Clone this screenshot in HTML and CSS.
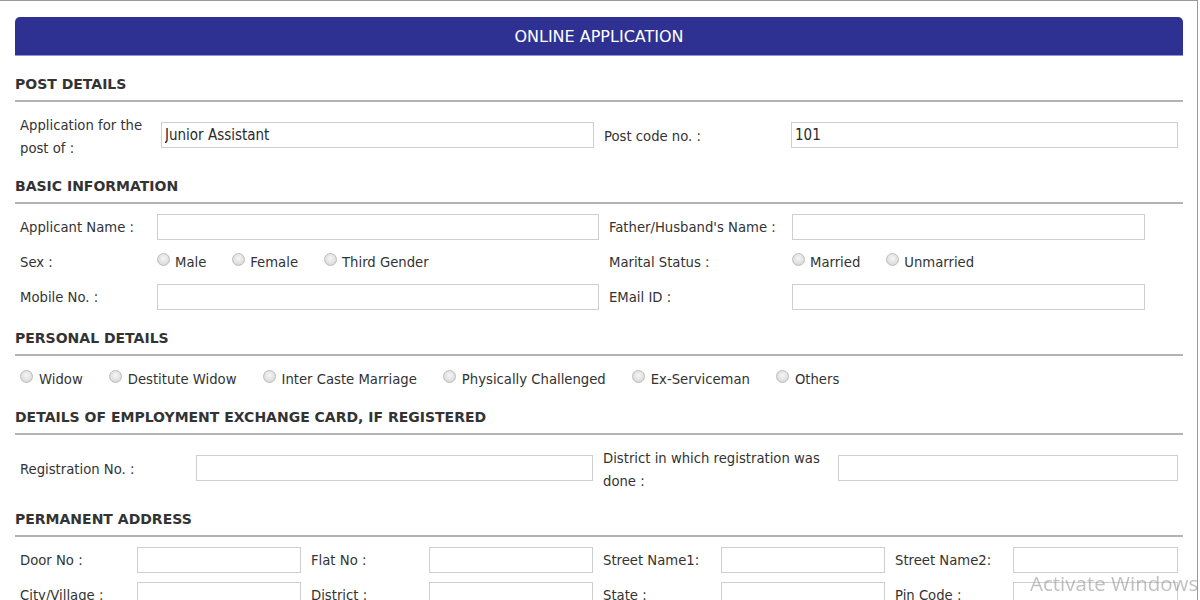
FILE: index.html
```html
<!DOCTYPE html>
<html>
<head>
<meta charset="utf-8">
<link rel="stylesheet" href="styles.css">
</head>
<body>
<div class="frame">
  <div class="bar">ONLINE APPLICATION</div>

  <h2 class="sec sec-post">POST DETAILS</h2>
  <div class="grid g-post tall">
    <div class="cell label two">Application for the<br>post of :</div>
    <div class="cell"><input class="field" type="text" value="Junior Assistant"></div>
    <div class="cell label">Post code no. :</div>
    <div class="cell"><input class="field" type="text" value="101"></div>
  </div>

  <h2 class="sec">BASIC INFORMATION</h2>
  <div class="rows">
    <div class="grid g-basic">
      <div class="cell label">Applicant Name :</div>
      <div class="cell"><input class="field" type="text"></div>
      <div class="cell label">Father/Husband's Name :</div>
      <div class="cell"><input class="field" type="text"></div>
    </div>
    <div class="grid g-basic">
      <div class="cell label">Sex :</div>
      <div class="cell opts">
        <label class="opt"><input class="radio" type="radio" name="sex">Male</label>
        <label class="opt"><input class="radio" type="radio" name="sex">Female</label>
        <label class="opt"><input class="radio" type="radio" name="sex">Third Gender</label>
      </div>
      <div class="cell label">Marital Status :</div>
      <div class="cell opts">
        <label class="opt"><input class="radio" type="radio" name="ms">Married</label>
        <label class="opt"><input class="radio" type="radio" name="ms">Unmarried</label>
      </div>
    </div>
    <div class="grid g-basic">
      <div class="cell label">Mobile No. :</div>
      <div class="cell"><input class="field" type="text"></div>
      <div class="cell label">EMail ID :</div>
      <div class="cell"><input class="field" type="text"></div>
    </div>
  </div>

  <h2 class="sec sec-personal">PERSONAL DETAILS</h2>
  <div class="rows">
    <div class="cell opts personal">
      <label class="opt"><input class="radio" type="radio" name="pd">Widow</label>
      <label class="opt"><input class="radio" type="radio" name="pd">Destitute Widow</label>
      <label class="opt"><input class="radio" type="radio" name="pd">Inter Caste Marriage</label>
      <label class="opt"><input class="radio" type="radio" name="pd">Physically Challenged</label>
      <label class="opt"><input class="radio" type="radio" name="pd">Ex-Serviceman</label>
      <label class="opt"><input class="radio" type="radio" name="pd">Others</label>
    </div>
  </div>

  <h2 class="sec sec-emp">DETAILS OF EMPLOYMENT EXCHANGE CARD, IF REGISTERED</h2>
  <div class="grid g-emp tall">
    <div class="cell label">Registration No. :</div>
    <div class="cell"><input class="field" type="text"></div>
    <div class="cell label two">District in which registration was<br>done :</div>
    <div class="cell"><input class="field" type="text"></div>
  </div>

  <h2 class="sec">PERMANENT ADDRESS</h2>
  <div class="rows">
    <div class="grid g-addr">
      <div class="cell label">Door No :</div>
      <div class="cell"><input class="field" type="text"></div>
      <div class="cell label">Flat No :</div>
      <div class="cell"><input class="field" type="text"></div>
      <div class="cell label">Street Name1:</div>
      <div class="cell"><input class="field" type="text"></div>
      <div class="cell label">Street Name2:</div>
      <div class="cell"><input class="field" type="text"></div>
    </div>
    <div class="grid g-addr">
      <div class="cell label">City/Village :</div>
      <div class="cell"><input class="field" type="text"></div>
      <div class="cell label">District :</div>
      <div class="cell"><input class="field" type="text"></div>
      <div class="cell label">State :</div>
      <div class="cell"><input class="field" type="text"></div>
      <div class="cell label">Pin Code :</div>
      <div class="cell"><input class="field" type="text"></div>
    </div>
  </div>
</div>
<div class="watermark">Activate Windows</div>
</body>
</html>
```

FILE: styles.css
```css
html, body {
  margin: 0;
  padding: 0;
  background: #fff;
  overflow: hidden;
}
body {
  font-family: "DejaVu Sans Condensed", "DejaVu Sans", sans-serif;
  font-size: 14.7px;
  color: #333;
}
.frame {
  padding: 16px 0 40px 15px;
  border-top: 1px solid #999;
  border-right: 1px solid #999;
  box-sizing: content-box;
  width: 1182px;
}
.bar {
  width: 1168px;
  height: 36px;
  padding-top: 2px;
  line-height: 36px;
  background: #2e3192;
  border-bottom: 1px solid #8f93d6;
  border-radius: 5px 5px 0 0;
  color: #fff;
  text-align: center;
  font-family: "DejaVu Sans", sans-serif;
  font-size: 16px;
}
.sec {
  width: 1168px;
  margin: 18px 0 0 0;
  padding: 0 0 6px 0;
  line-height: 20px;
  font-family: "DejaVu Sans", sans-serif;
  font-size: 14px;
  font-weight: bold;
  color: #333;
  border-bottom: 2px solid #b4b4b4;
}
.sec-personal { margin-top: 14px; }
.sec-emp { margin-top: 11px; }
.grid {
  display: grid;
  align-items: center;
  height: 35px;
}
.grid.tall {
  height: 46px;
  margin-top: 9px;
  padding-bottom: 1px;
}
.label.two {
  align-self: start;
  padding-top: 2px;
}
.rows {
  margin-top: 5px;
}
.g-post { grid-template-columns: 141px 443px 187px 397px; }
.g-basic { grid-template-columns: 137px 452px 183px 363px; }
.g-emp { grid-template-columns: 176px 407px 235px 350px; }
.g-addr { grid-template-columns: 117px 174px 118px 174px 118px 174px 118px 175px; }
.cell {
  padding: 0 5px;
  line-height: 23px;
}
.label {
  color: #333;
}
.field {
  display: block;
  width: 100%;
  height: 26px;
  box-sizing: border-box;
  border: 1px solid #cfcfcf;
  background: #fff;
  padding: 0 3px;
  margin: 0;
  font-family: inherit;
  font-size: 15px;
  color: #2a2a2a;
  outline: none;
}
.opts {
  display: flex;
  align-items: center;
  gap: 26px;
}
.personal {
  height: 35px;
}
.personal .radio {
  margin-right: 6px;
}
.opt {
  display: inline-flex;
  align-items: center;
  color: #333;
}
.radio {
  appearance: none;
  -webkit-appearance: none;
  width: 13px;
  height: 13px;
  margin: 0 5px 4px 0;
  border-radius: 50%;
  border: 1px solid #bdbdbd;
  background: radial-gradient(circle at 50% 40%, #f6f6f6 0%, #e0e0e0 60%, #cdcdcd 100%);
  box-sizing: border-box;
  flex: none;
}
.watermark {
  position: fixed;
  left: 1030px;
  top: 569px;
  font-family: "Open Sans", "Liberation Sans", sans-serif;
  font-size: 20.5px;
  color: rgba(140, 140, 140, 0.55);
  white-space: nowrap;
}
```
